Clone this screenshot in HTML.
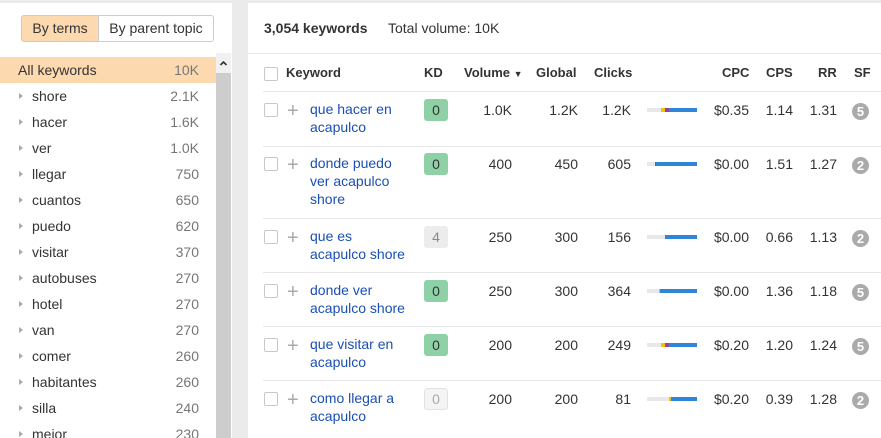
<!DOCTYPE html>
<html><head><meta charset="utf-8"><style>
*{box-sizing:border-box;margin:0;padding:0}
body{width:881px;height:438px;overflow:hidden;background:#ebebeb;font-family:"Liberation Sans",Arial,sans-serif;font-size:13px;color:#333;position:relative}
.a{position:absolute;white-space:nowrap}
#left{position:absolute;left:0;top:3px;width:232px;height:435px;background:#fff;overflow:hidden}
#right{position:absolute;left:248px;top:3px;width:633px;height:435px;background:#fff;overflow:hidden}
.btn{position:absolute;top:12px;height:27px;border:1px solid #ccc;font-size:14px;line-height:25px;text-align:center}
.li{position:absolute;left:0;width:216px;height:26px;line-height:26px;font-size:14px}
.li .t{position:absolute;left:32px}
.li .n{position:absolute;right:17px;color:#777}
.li .tri{position:absolute;left:19px;top:10px;width:0;height:0;border-left:4px solid #aaa;border-top:3px solid transparent;border-bottom:3px solid transparent}
.hl{position:absolute;left:15px;right:0;height:1px;background:#e6e6e6}
.cb{position:absolute;left:16px;width:14px;height:14px;border:1px solid #c8c8c8;border-radius:2px;background:#fff}
.pl{position:absolute;left:39px;font-size:20px;color:#aaa;line-height:14px}
.kw{position:absolute;left:62px;color:#1a4fb3;font-size:14px;line-height:18px;white-space:normal;width:100px}
.kd{position:absolute;left:176px;width:24px;height:22px;border-radius:3px;background:#8fd1a7;text-align:center;line-height:22px;font-size:14px}
.r{position:absolute;text-align:right;font-size:14px}
.bar{position:absolute;left:399px;width:50px;height:4px;background:#e8e8ea}
.bar i{position:absolute;top:0;height:4px}
.sf{position:absolute;left:604px;width:17px;height:17px;border-radius:50%;background:#aaa;color:#fff;font-size:13px;font-weight:bold;text-align:center;line-height:17px}
.h{position:absolute;top:62px;font-weight:bold;font-size:13px;color:#333}
</style></head><body>
<div id="left">
<div class="btn" style="left:21px;width:78px;background:#fdd9b0;border-color:#e8c69c;border-radius:3px 0 0 3px">By terms</div>
<div class="btn" style="left:98px;width:116px;border-radius:0 3px 3px 0">By parent topic</div>
<div class="li" style="top:54px;background:#fdd9b0"><span class="t" style="left:18px">All keywords</span><span class="n">10K</span></div>
<div class="li" style="top:80px"><i class="tri"></i><span class="t">shore</span><span class="n">2.1K</span></div>
<div class="li" style="top:106px"><i class="tri"></i><span class="t">hacer</span><span class="n">1.6K</span></div>
<div class="li" style="top:132px"><i class="tri"></i><span class="t">ver</span><span class="n">1.0K</span></div>
<div class="li" style="top:158px"><i class="tri"></i><span class="t">llegar</span><span class="n">750</span></div>
<div class="li" style="top:184px"><i class="tri"></i><span class="t">cuantos</span><span class="n">650</span></div>
<div class="li" style="top:210px"><i class="tri"></i><span class="t">puedo</span><span class="n">620</span></div>
<div class="li" style="top:236px"><i class="tri"></i><span class="t">visitar</span><span class="n">370</span></div>
<div class="li" style="top:262px"><i class="tri"></i><span class="t">autobuses</span><span class="n">270</span></div>
<div class="li" style="top:288px"><i class="tri"></i><span class="t">hotel</span><span class="n">270</span></div>
<div class="li" style="top:314px"><i class="tri"></i><span class="t">van</span><span class="n">270</span></div>
<div class="li" style="top:340px"><i class="tri"></i><span class="t">comer</span><span class="n">260</span></div>
<div class="li" style="top:366px"><i class="tri"></i><span class="t">habitantes</span><span class="n">260</span></div>
<div class="li" style="top:392px"><i class="tri"></i><span class="t">silla</span><span class="n">240</span></div>
<div class="li" style="top:418px"><i class="tri"></i><span class="t">mejor</span><span class="n">230</span></div>
<div class="a" style="left:216px;top:50px;width:15px;height:20px;background:#f1f1f1"><svg width="15" height="20"><path d="M4.5 12 L7.5 9 L10.5 12" fill="none" stroke="#333" stroke-width="1.6"/></svg></div>
<div class="a" style="left:216px;top:70px;width:15px;height:370px;background:#cdcdcd"></div>
</div>
<div id="right">
<div class="a" style="left:16px;top:17px;font-weight:bold;font-size:14px">3,054 keywords</div>
<div class="a" style="left:140px;top:17px;font-size:14px">Total volume: 10K</div>
<div class="a" style="left:0;top:50px;width:633px;height:1px;background:#e6e6e6"></div>
<div class="cb" style="top:64px"></div>
<div class="h" style="left:38px">Keyword</div>
<div class="h" style="left:176px">KD</div>
<div class="h" style="left:216px">Volume <span style="font-size:9px">&#9660;</span></div>
<div class="h" style="left:288px">Global</div>
<div class="h" style="left:346px">Clicks</div>
<div class="h" style="left:474px">CPC</div>
<div class="h" style="left:518px">CPS</div>
<div class="h" style="left:570px">RR</div>
<div class="h" style="left:606px">SF</div>
<div class="hl" style="top:88px"></div>

<div class="cb" style="top:100px"></div><div class="pl" style="top:101px">+</div>
<div class="kw" style="top:97px">que hacer en acapulco</div>
<div class="kd" style="top:96px">0</div>
<div class="r" style="right:369px;top:99px">1.0K</div><div class="r" style="right:303px;top:99px">1.2K</div><div class="r" style="right:250px;top:99px">1.2K</div>
<div class="bar" style="top:105px"><i style="left:14px;width:4px;background:#f2c400"></i><i style="left:18px;width:4px;background:#9b3fa0"></i><i style="left:22px;width:28px;background:#2f86d8"></i></div>
<div class="r" style="right:132px;top:99px">$0.35</div><div class="r" style="right:88px;top:99px">1.14</div><div class="r" style="right:44px;top:99px">1.31</div>
<div class="sf" style="top:100px">5</div>
<div class="hl" style="top:143px"></div>

<div class="cb" style="top:154px"></div><div class="pl" style="top:155px">+</div>
<div class="kw" style="top:151px">donde puedo ver acapulco shore</div>
<div class="kd" style="top:150px">0</div>
<div class="r" style="right:369px;top:153px">400</div><div class="r" style="right:303px;top:153px">450</div><div class="r" style="right:250px;top:153px">605</div>
<div class="bar" style="top:159px"><i style="left:8px;width:1px;background:#9b3fa0"></i><i style="left:9px;width:41px;background:#2f86d8"></i></div>
<div class="r" style="right:132px;top:153px">$0.00</div><div class="r" style="right:88px;top:153px">1.51</div><div class="r" style="right:44px;top:153px">1.27</div>
<div class="sf" style="top:154px">2</div>
<div class="hl" style="top:215px"></div>

<div class="cb" style="top:227px"></div><div class="pl" style="top:228px">+</div>
<div class="kw" style="top:224px">que es<br>acapulco shore</div>
<div class="kd" style="top:223px;background:#ececec;color:#888">4</div>
<div class="r" style="right:369px;top:226px">250</div><div class="r" style="right:303px;top:226px">300</div><div class="r" style="right:250px;top:226px">156</div>
<div class="bar" style="top:232px"><i style="left:18px;width:32px;background:#2f86d8"></i></div>
<div class="r" style="right:132px;top:226px">$0.00</div><div class="r" style="right:88px;top:226px">0.66</div><div class="r" style="right:44px;top:226px">1.13</div>
<div class="sf" style="top:227px">2</div>
<div class="hl" style="top:269px"></div>

<div class="cb" style="top:281px"></div><div class="pl" style="top:282px">+</div>
<div class="kw" style="top:278px">donde ver<br>acapulco shore</div>
<div class="kd" style="top:277px">0</div>
<div class="r" style="right:369px;top:280px">250</div><div class="r" style="right:303px;top:280px">300</div><div class="r" style="right:250px;top:280px">364</div>
<div class="bar" style="top:286px"><i style="left:12px;width:1px;background:#f2c400"></i><i style="left:13px;width:37px;background:#2f86d8"></i></div>
<div class="r" style="right:132px;top:280px">$0.00</div><div class="r" style="right:88px;top:280px">1.36</div><div class="r" style="right:44px;top:280px">1.18</div>
<div class="sf" style="top:281px">5</div>
<div class="hl" style="top:323px"></div>

<div class="cb" style="top:335px"></div><div class="pl" style="top:336px">+</div>
<div class="kw" style="top:332px">que visitar en acapulco</div>
<div class="kd" style="top:331px">0</div>
<div class="r" style="right:369px;top:334px">200</div><div class="r" style="right:303px;top:334px">200</div><div class="r" style="right:250px;top:334px">249</div>
<div class="bar" style="top:340px"><i style="left:14px;width:4px;background:#f2c400"></i><i style="left:18px;width:4px;background:#9b3fa0"></i><i style="left:22px;width:28px;background:#2f86d8"></i></div>
<div class="r" style="right:132px;top:334px">$0.20</div><div class="r" style="right:88px;top:334px">1.20</div><div class="r" style="right:44px;top:334px">1.24</div>
<div class="sf" style="top:335px">5</div>
<div class="hl" style="top:377px"></div>

<div class="cb" style="top:389px"></div><div class="pl" style="top:390px">+</div>
<div class="kw" style="top:386px">como llegar a acapulco</div>
<div class="kd" style="top:385px;background:#f4f4f4;border:1px solid #e2e2e2;color:#aaa;line-height:20px">0</div>
<div class="r" style="right:369px;top:388px">200</div><div class="r" style="right:303px;top:388px">200</div><div class="r" style="right:250px;top:388px">81</div>
<div class="bar" style="top:394px"><i style="left:22px;width:2px;background:#f2c400"></i><i style="left:24px;width:26px;background:#2f86d8"></i></div>
<div class="r" style="right:132px;top:388px">$0.20</div><div class="r" style="right:88px;top:388px">0.39</div><div class="r" style="right:44px;top:388px">1.28</div>
<div class="sf" style="top:389px">2</div>
</div>
</body></html>
